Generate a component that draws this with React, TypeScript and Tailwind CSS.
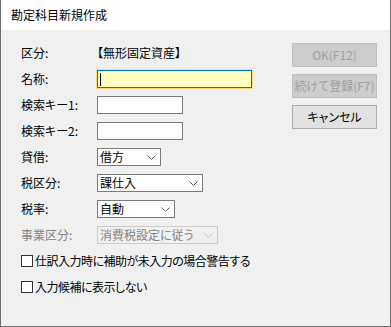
import React from 'react';

const font = "font-['Noto_Sans_CJK_JP','Noto_Sans',sans-serif] [font-feature-settings:'palt']";

const Chevron = ({ disabled }: { disabled?: boolean }) => (
  <svg width="9" height="5" viewBox="0 0 9 5" className="shrink-0">
    <polyline points="0.5,0.5 4.5,4.5 8.5,0.5" fill="none" stroke={disabled ? '#c4c4c4' : '#5a5a5a'} strokeWidth="1" />
  </svg>
);

const Select = ({ value, width, disabled }: { value: string; width: string; disabled?: boolean }) => (
  <div
    className={`${width} h-[18px] flex items-center justify-between pl-[2px] pr-[4px] border ${
      disabled ? 'border-[#cccccc] bg-[#f0f0f0] text-[#838383]' : 'border-[#7a7a7a] bg-white text-black'
    }`}
  >
    <span className="leading-none">{value}</span>
    <Chevron disabled={disabled} />
  </div>
);

const Row = ({ label, disabled, children }: { label: string; disabled?: boolean; children: React.ReactNode }) => (
  <div className="h-[26px] flex items-center">
    <div className={`w-[76px] ${disabled ? 'text-[#838383]' : 'text-black'}`}>{label}</div>
    {children}
  </div>
);

const Check = ({ label }: { label: string }) => (
  <div className="h-[26px] flex items-center gap-[2px]">
    <div className="w-[12px] h-[12px] border border-[#333333] bg-white" />
    <span className="tracking-[-0.5px]">{label}</span>
  </div>
);

const Button = ({ label, disabled }: { label: string; disabled?: boolean }) => (
  <div
    className={`w-[85px] h-[24px] flex items-center justify-center border ${
      disabled ? 'bg-[#cccccc] border-[#bfbfbf] text-[#a0a0a0]' : 'bg-[#e1e1e1] border-[#adadad] text-black'
    }`}
  >
    {label}
  </div>
);

export default function App() {
  return (
    <div className={`w-[391px] h-[327px] flex flex-col text-[12px] ${font}`}>
      <div className="h-[30px] bg-white flex items-center pl-[10px] border-x border-[#707070]">勘定科目新規作成</div>
      <div className="flex-1 bg-[#f0f0f0] flex border-x border-b border-[#707070]">
        <div className="flex flex-col pl-[20px] pt-[10px]">
          <Row label="区分:">
            <span>【無形固定資産】</span>
          </Row>
          <Row label="名称:">
            <div className="-ml-[1px] border border-[#ffd77a]">
              <div className="w-[155px] h-[18px] border border-[#0078d7] bg-[#ffffc0] flex items-center pl-[2px]">
                <div className="w-[1px] h-[13px] bg-black" />
              </div>
            </div>
          </Row>
          <Row label="検索キー1:">
            <div className="w-[86px] h-[18px] border border-[#7a7a7a] bg-white" />
          </Row>
          <Row label="検索キー2:">
            <div className="w-[86px] h-[18px] border border-[#7a7a7a] bg-white" />
          </Row>
          <Row label="貸借:">
            <Select value="借方" width="w-[64px]" />
          </Row>
          <Row label="税区分:">
            <Select value="課仕入" width="w-[106px]" />
          </Row>
          <Row label="税率:">
            <Select value="自動" width="w-[78px]" />
          </Row>
          <Row label="事業区分:" disabled>
            <Select value="消費税設定に従う" width="w-[121px]" disabled />
          </Row>
          <Check label="仕訳入力時に補助が未入力の場合警告する" />
          <Check label="入力候補に表示しない" />
        </div>
        <div className="ml-auto pr-[13px] pt-[13px] flex flex-col gap-[7px]">
          <Button label="OK(F12)" disabled />
          <Button label="続けて登録(F7)" disabled />
          <Button label="キャンセル" />
        </div>
      </div>
    </div>
  );
}
